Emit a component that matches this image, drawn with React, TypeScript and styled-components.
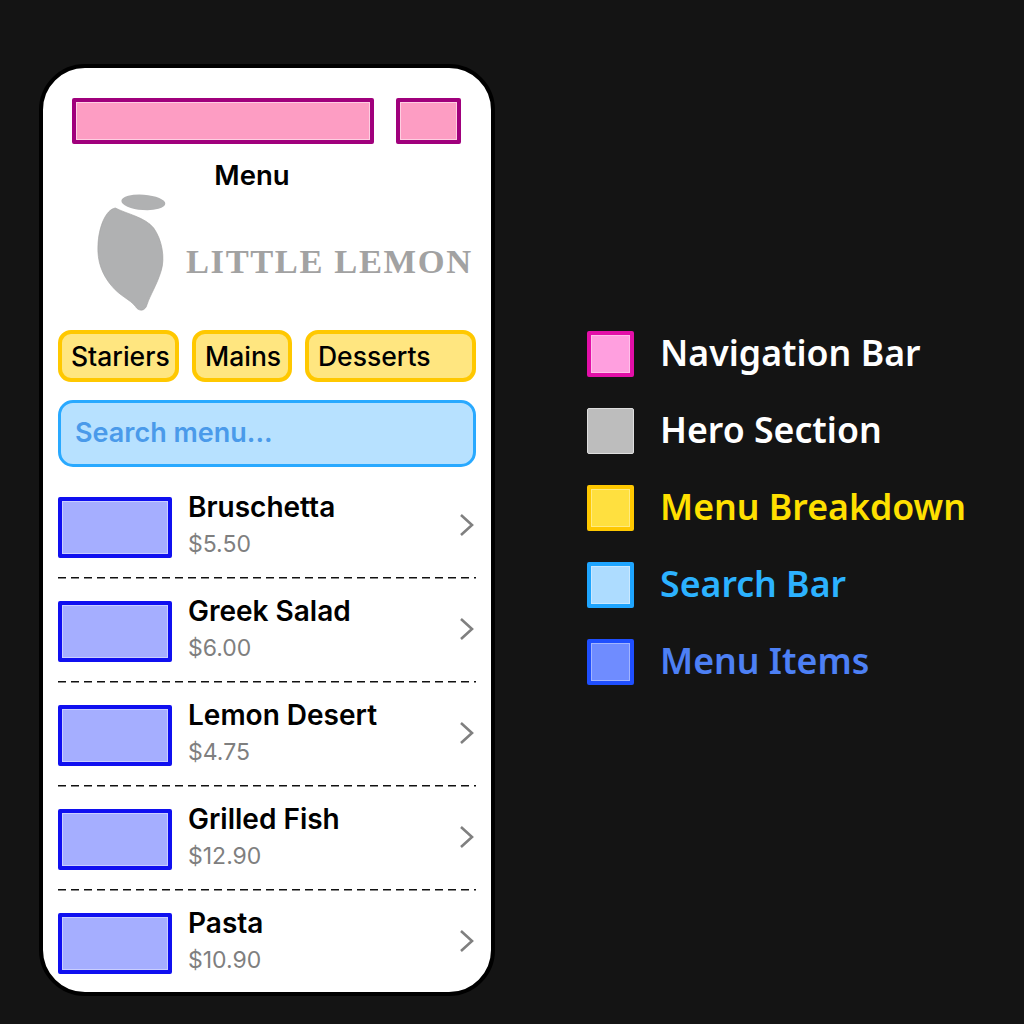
import React from "react";
import styled, { createGlobalStyle } from "styled-components";

const Global = createGlobalStyle`
  html, body {
    margin: 0;
    background: #141414;
  }
`;

const Page = styled.div`
  width: 1024px;
  height: 1024px;
  box-sizing: border-box;
  padding: 64px 0 0 39px;
  display: flex;
  gap: 92px;
  background: #141414;
  font-family: Inter, "Liberation Sans", sans-serif;
`;

const Phone = styled.div`
  width: 456px;
  height: 932px;
  box-sizing: border-box;
  padding: 30px 15px 0;
  background: #fff;
  border: 4px solid #000;
  border-radius: 46px;
  overflow: hidden;
`;

const NavBar = styled.div`
  display: flex;
  gap: 22px;
  padding: 0 15px 0 14px;
`;

const NavBlock = styled.div<{ $width: number }>`
  width: ${(p) => p.$width}px;
  height: 46px;
  box-sizing: border-box;
  background: #fd9dc3;
  border: 4px solid #a0007c;
  border-radius: 2px;
  box-shadow: inset 0 0 0 1px rgba(255, 255, 255, 0.5);
`;

const Title = styled.div`
  width: 388px;
  margin-top: 14px;
  text-align: center;
  font-size: 27.5px;
  line-height: 34px;
  font-weight: 600;
  color: #000;
`;

const Hero = styled.div`
  display: flex;
  align-items: center;
  gap: 19px;
  height: 120px;
  margin-top: 1px;
  padding-left: 39px;
`;

const Wordmark = styled.div`
  padding-top: 16px;
  font-family: "Liberation Serif", "DejaVu Serif", serif;
  font-size: 34.5px;
  font-weight: 700;
  letter-spacing: 1.6px;
  white-space: nowrap;
  color: #a2a2a2;
`;

const Tabs = styled.div`
  display: flex;
  gap: 13px;
  margin-top: 17px;
`;

const Tab = styled.div<{ $width: number }>`
  width: ${(p) => p.$width}px;
  height: 52px;
  box-sizing: border-box;
  padding-left: 9px;
  display: flex;
  align-items: center;
  background: #ffe680;
  border: 4px solid #ffc800;
  border-radius: 13px;
  font-size: 26.5px;
  font-weight: 500;
  color: #000;
`;

const Search = styled.div`
  height: 67px;
  box-sizing: border-box;
  margin-top: 18px;
  padding: 0 0 2px 14px;
  display: flex;
  align-items: center;
  background: #b7e1ff;
  border: 3px solid #29a9ff;
  border-radius: 15px;
  font-size: 27px;
  font-weight: 600;
  color: #4a9aea;
`;

const Items = styled.div`
  margin-top: 10px;
`;

const Item = styled.div`
  height: 104px;
  box-sizing: border-box;
  padding: 20px 1px 0 0;
  display: flex;
  align-items: flex-start;
  background: repeating-linear-gradient(90deg, #111 0 8px, transparent 8px 13px) left 100px / 419px 1.5px no-repeat;

  &:last-child {
    background: none;
  }
`;

const Thumb = styled.div`
  width: 114px;
  height: 61px;
  flex: none;
  box-sizing: border-box;
  background: #a5aeff;
  border: 4px solid #1010f0;
  border-radius: 2px;
  box-shadow: inset 0 0 0 1px rgba(255, 255, 255, 0.4);
`;

const Info = styled.div`
  flex: 1;
  margin: -7px 0 0 16px;
`;

const Name = styled.div`
  font-size: 28px;
  line-height: 34px;
  font-weight: 600;
  color: #000;
`;

const Price = styled.div`
  margin-top: 3px;
  font-size: 23px;
  line-height: 34px;
  color: #7f7f7f;
`;

const Chevron = styled.svg`
  width: 16px;
  height: 24px;
  margin-top: 16px;
  flex: none;
`;

const Legend = styled.div`
  display: flex;
  flex-direction: column;
  gap: 31px;
  padding-top: 267px;
`;

const LegendRow = styled.div`
  display: flex;
  align-items: center;
  gap: 26px;
  height: 46px;
`;

const Swatch = styled.div<{ $fill: string; $border: string; $line: number }>`
  width: 47px;
  height: 46px;
  box-sizing: border-box;
  background: ${(p) => p.$fill};
  border: ${(p) => p.$line}px solid ${(p) => p.$border};
  border-radius: 2px;
  box-shadow: ${(p) => (p.$line > 1 ? "inset 0 0 0 1px rgba(255, 255, 255, 0.35)" : "none")};
`;

const LegendLabel = styled.div<{ $color: string }>`
  padding-bottom: 5px;
  font-family: "Noto Sans", "Open Sans", sans-serif;
  font-size: 35.7px;
  font-weight: 600;
  white-space: nowrap;
  color: ${(p) => p.$color};
`;

const tabs = [
  { label: "Stariers", width: 121 },
  { label: "Mains", width: 100 },
  { label: "Desserts", width: 171 },
];

const menu = [
  { name: "Bruschetta", price: "$5.50" },
  { name: "Greek Salad", price: "$6.00" },
  { name: "Lemon Desert", price: "$4.75" },
  { name: "Grilled Fish", price: "$12.90" },
  { name: "Pasta", price: "$10.90" },
];

const legend = [
  { label: "Navigation Bar", color: "#fff", fill: "#ff9fdf", border: "#e30fa8", line: 4 },
  { label: "Hero Section", color: "#fff", fill: "#bdbdbd", border: "#dedede", line: 1 },
  { label: "Menu Breakdown", color: "#ffe000", fill: "#ffe03f", border: "#ffc800", line: 4 },
  { label: "Search Bar", color: "#2cb2ff", fill: "#addcff", border: "#1ea5ff", line: 4 },
  { label: "Menu Items", color: "#4d80f5", fill: "#6f8cff", border: "#1f4fff", line: 4 },
];

function Lemon() {
  return (
    <svg width="70" height="120" viewBox="200 415 210 360" style={{ flex: "none" }}>
      <ellipse cx="339" cy="443" rx="66" ry="23" transform="rotate(4 339 443)" fill="#b0b1b2" />
      <path
        d="M255 460 C290 478 345 488 370 520 C395 555 405 610 392 650 C380 690 360 720 350 750 C345 770 325 772 315 755 C300 735 270 725 245 695 C215 660 200 620 203 570 C205 520 225 465 255 460 Z"
        fill="#b0b1b2"
        stroke="#a3a3a3"
        strokeWidth="2"
      />
    </svg>
  );
}

export default function App() {
  return (
    <Page>
      <Global />
      <Phone>
        <NavBar>
          <NavBlock $width={302} />
          <NavBlock $width={65} />
        </NavBar>
        <Title>Menu</Title>
        <Hero>
          <Lemon />
          <Wordmark>LITTLE LEMON</Wordmark>
        </Hero>
        <Tabs>
          {tabs.map((t) => (
            <Tab key={t.label} $width={t.width}>
              {t.label}
            </Tab>
          ))}
        </Tabs>
        <Search>Search menu...</Search>
        <Items>
          {menu.map((m) => (
            <Item key={m.name}>
              <Thumb />
              <Info>
                <Name>{m.name}</Name>
                <Price>{m.price}</Price>
              </Info>
              <Chevron viewBox="0 0 16 24">
                <polyline points="2,2 13,12 2,22" fill="none" stroke="#808080" strokeWidth="2.6" />
              </Chevron>
            </Item>
          ))}
        </Items>
      </Phone>
      <Legend>
        {legend.map((l) => (
          <LegendRow key={l.label}>
            <Swatch $fill={l.fill} $border={l.border} $line={l.line} />
            <LegendLabel $color={l.color}>{l.label}</LegendLabel>
          </LegendRow>
        ))}
      </Legend>
    </Page>
  );
}
